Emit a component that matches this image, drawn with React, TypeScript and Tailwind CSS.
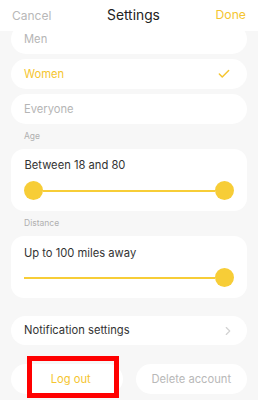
import { Check, ChevronRight } from "lucide-react";

const font = { fontFamily: "Inter, 'Noto Sans', sans-serif" };

function Row({
  label,
  active,
  muted,
  className = "",
}: {
  label: string;
  active?: boolean;
  muted?: boolean;
  className?: string;
}) {
  return (
    <div
      className={`flex h-[30px] items-center justify-between rounded-[15px] bg-white pl-[13px] pr-[16px] text-[11.2px] ${
        active ? "text-[#f5c52f]" : muted ? "text-[#b5b5b5]" : "text-[#333]"
      } ${className}`}
    >
      <span>{label}</span>
      {active && <Check size={14} strokeWidth={2.5} className="text-[#f5c52f]" />}
    </div>
  );
}

function Thumb() {
  return <div className="h-[19px] w-[19px] shrink-0 rounded-full bg-[#f7cd37]" />;
}

export default function App() {
  return (
    <div style={font} className="flex h-[400px] w-[258px] flex-col overflow-hidden bg-[#f7f7f7]">
      <header className="relative z-10 flex h-[31px] shrink-0 items-center justify-between bg-white px-[12px]">
        <span className="text-[12px] text-[#b8b8b8]">Cancel</span>
        <span className="text-[13.8px] text-[#222]">Settings</span>
        <span className="text-[12.2px] text-[#f5c52f]">Done</span>
      </header>

      <div className="flex flex-col px-[11px]">
        <Row label="Men" muted className="-mt-[7px]" />
        <Row label="Women" active className="mt-[5px]" />
        <Row label="Everyone" muted className="mt-[5px] h-[29px]" />

        <div className="mt-[6px] h-[12px] pl-[13px] text-[8.5px] leading-[12px] text-[#b0b0b0]">Age</div>
        <div className="mt-[7px] flex h-[62px] flex-col rounded-[13px] bg-white px-[13px] pt-[8px]">
          <div className="pl-[0.5px] text-[11.2px] leading-[16px] text-[#333]">Between 18 and 80</div>
          <div className="mt-[8px] flex items-center">
            <Thumb />
            <div className="h-[2px] flex-1 bg-[#f7cd37]" />
            <Thumb />
          </div>
        </div>

        <div className="mt-[6px] h-[12px] pl-[13px] text-[8.5px] leading-[12px] text-[#b0b0b0]">Distance</div>
        <div className="mt-[7px] flex h-[62px] flex-col rounded-[13px] bg-white px-[13px] pt-[9px]">
          <div className="text-[11.2px] leading-[16px] text-[#333]">Up to 100 miles away</div>
          <div className="mt-[7px] flex items-center">
            <div className="h-[2px] flex-1 bg-[#f7cd37]" />
            <Thumb />
          </div>
        </div>

        <div className="mt-[18px] flex h-[29px] items-center justify-between rounded-[15px] bg-white pl-[13px] pr-[12px] text-[11.2px] text-[#333]">
          <span>Notification settings</span>
          <ChevronRight size={14} strokeWidth={2} className="text-[#d2d2d2]" />
        </div>

        <div className="mt-[19px] flex gap-[13px]">
          <div className="relative flex h-[30px] flex-1 items-center justify-center rounded-[15px] bg-white text-[11.2px] text-[#f5c52f]">
            <span className="pl-[8px]">Log out</span>
            <div className="absolute -top-[8px] -bottom-[4px] left-[16px] right-[4px] border-[5px] border-[#ff0000]" />
          </div>
          <div className="flex h-[30px] flex-1 items-center justify-center rounded-[15px] bg-white text-[11.2px] text-[#b8b8b8]">
            Delete account
          </div>
        </div>
      </div>
    </div>
  );
}
